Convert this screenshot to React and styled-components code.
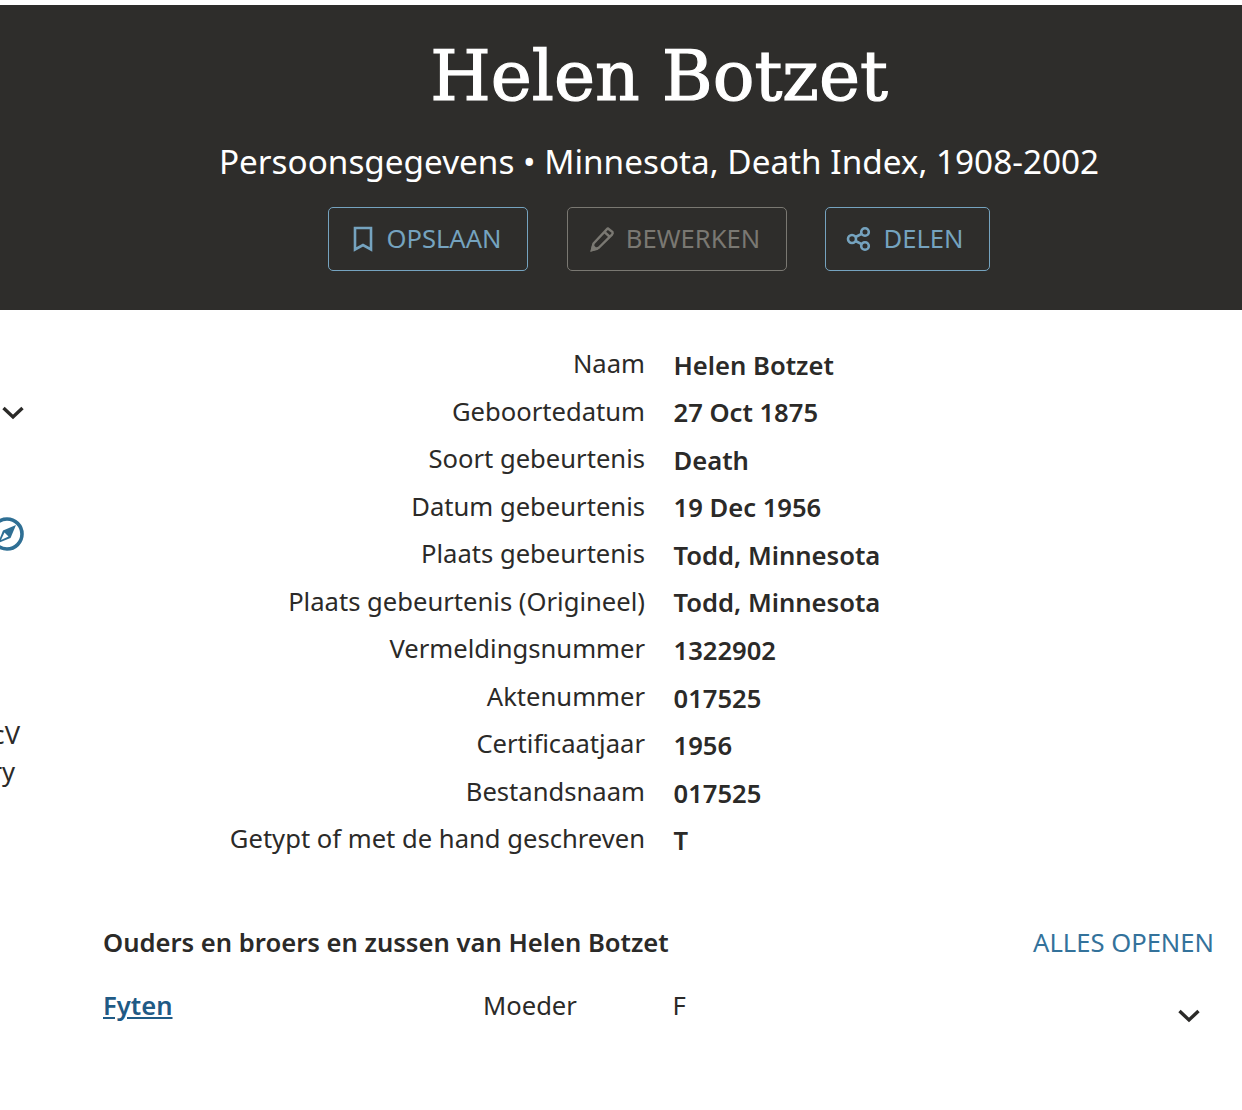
import { Fragment } from "react";
import styled, { createGlobalStyle } from "styled-components";

const GlobalStyle = createGlobalStyle`
  html, body {
    margin: 0;
    padding: 0;
    background: #fff;
  }
  body {
    font-family: "Noto Sans", "Open Sans", sans-serif;
    color: #2b2a28;
    overflow: hidden;
  }
`;

const Page = styled.div`
  width: 1242px;
  height: 1110px;
  padding-top: 5px;
  box-sizing: border-box;
  overflow: hidden;
`;

const Hero = styled.header`
  height: 305px;
  background: #2e2d2b;
  display: flex;
  flex-direction: column;
  align-items: center;
  padding-left: 76px;
  box-sizing: border-box;
`;

const Title = styled.h1`
  margin: 29px 0 0;
  font-family: "DejaVu Serif", serif;
  font-weight: 400;
  font-size: 69.4px;
  line-height: 84px;
  color: #fff;
  -webkit-text-stroke: 1.2px #fff;
  white-space: nowrap;
`;

const Subtitle = styled.p`
  margin: 21px 0 0;
  font-size: 33.3px;
  line-height: 44px;
  color: #fff;
  white-space: nowrap;
`;

const Actions = styled.div`
  display: flex;
  gap: 38px;
  margin-top: 24px;
`;

const ActionButton = styled.div`
  display: flex;
  align-items: center;
  justify-content: center;
  gap: 11px;
  width: ${(p) => p.$width}px;
  height: 64px;
  padding-right: 5px;
  box-sizing: border-box;
  border: 1px solid ${(p) => (p.$disabled ? "#7a7872" : "#75a3bf")};
  border-radius: 5px;
  color: ${(p) => (p.$disabled ? "#7a7872" : "#75a3bf")};
  font-size: 25.6px;
  white-space: nowrap;
  &:first-child {
    margin-right: 1px;
    padding-right: 3px;
  }
`;

const ButtonLabel = styled.span`
  margin-bottom: 2px;
`;

const Body = styled.main`
  display: flex;
  height: 800px;
`;

const Sidebar = styled.aside`
  width: 25px;
  flex: none;
  overflow: hidden;
  display: flex;
  flex-direction: column;
  align-items: flex-end;
`;

const SideChevron = styled.svg`
  margin: 95px 0 0 1px;
  width: 24px;
  height: 16px;
  align-self: flex-start;
`;

const SideCompass = styled.svg`
  margin: 96px 1px 0 0;
  width: 34px;
  height: 34px;
  flex: none;
`;

const SideText = styled.div`
  margin-top: 165px;
  width: 120px;
  flex: none;
  font-size: 25.6px;
  line-height: 37px;
  white-space: nowrap;
`;

const SideLine = styled.div`
  text-align: right;
  padding-right: ${(p) => p.$inset}px;
`;

const Content = styled.div`
  flex: 1;
  min-width: 0;
`;

const Facts = styled.dl`
  display: grid;
  grid-template-columns: 620px 1fr;
  grid-auto-rows: 47.55px;
  column-gap: 28.5px;
  margin: 30px 0 0;
`;

const FactLabel = styled.dt`
  text-align: right;
  font-size: 25.6px;
  line-height: 47.5px;
  white-space: nowrap;
`;

const FactValue = styled.dd`
  margin: 1.7px 0 0;
  font-size: 25.6px;
  font-weight: 600;
  line-height: 47.5px;
  white-space: nowrap;
`;

const FamilyHeader = styled.div`
  display: flex;
  justify-content: space-between;
  align-items: center;
  margin: 62px 28px 0 78px;
`;

const FamilyTitle = styled.h2`
  margin: 0;
  font-size: 25.6px;
  font-weight: 600;
  line-height: 36px;
  white-space: nowrap;
`;

const OpenAll = styled.span`
  font-size: 25.6px;
  line-height: 36px;
  color: #33729b;
  white-space: nowrap;
`;

const FamilyRow = styled.div`
  display: grid;
  grid-template-columns: 380px 189.5px 1fr 24px;
  align-items: start;
  margin: 27px 41px 0 78px;
  font-size: 25.6px;
  line-height: 36px;
`;

const PersonLink = styled.a`
  color: #1f5a85;
  font-weight: 600;
  text-decoration: underline;
`;

const RowChevron = styled.svg`
  width: 24px;
  height: 16px;
  margin-top: 20px;
`;

const Chevron = ({ as: Icon }) => (
  <Icon viewBox="0 0 24 16" fill="none" stroke="#2b2a28" strokeWidth="3.4">
    <path d="M2.5 3 L12 12 L21.5 3" />
  </Icon>
);

const facts = [
  ["Naam", "Helen Botzet"],
  ["Geboortedatum", "27 Oct 1875"],
  ["Soort gebeurtenis", "Death"],
  ["Datum gebeurtenis", "19 Dec 1956"],
  ["Plaats gebeurtenis", "Todd, Minnesota"],
  ["Plaats gebeurtenis (Origineel)", "Todd, Minnesota"],
  ["Vermeldingsnummer", "1322902"],
  ["Aktenummer", "017525"],
  ["Certificaatjaar", "1956"],
  ["Bestandsnaam", "017525"],
  ["Getypt of met de hand geschreven", "T"],
];

const BookmarkIcon = () => (
  <svg width="24" height="26" viewBox="0 0 24 26" fill="none" stroke="currentColor" strokeWidth="2.6">
    <path d="M4 2 H20 V23.5 L12 19 L4 23.5 Z" />
  </svg>
);

const PencilIcon = () => (
  <svg width="26" height="26" viewBox="0 0 26 26" fill="none" stroke="currentColor" strokeWidth="2.4">
    <path d="M19 2.5 L23.5 6 C24 7 23.8 7.6 23 8.6 L9.5 22 L3 24 L4.5 17.5 L18 3.2 C18.4 2.8 18.6 2.6 19 2.5 Z" />
    <path d="M15.5 6 L21 11" />
    <path d="M3 24 L4 20 L7 23 Z" fill="currentColor" />
  </svg>
);

const ShareIcon = () => (
  <svg width="26" height="26" viewBox="0 0 26 26" fill="none" stroke="currentColor" strokeWidth="2.6">
    <circle cx="6" cy="13" r="4" />
    <circle cx="19" cy="6" r="3.8" />
    <circle cx="19" cy="20" r="3.8" />
    <path d="M9.6 11 L15.6 7.8 M9.6 15 L15.6 18.2" />
  </svg>
);

export default function App() {
  return (
    <Page>
      <GlobalStyle />
      <Hero>
        <Title>Helen Botzet</Title>
        <Subtitle>Persoonsgegevens • Minnesota, Death Index, 1908-2002</Subtitle>
        <Actions>
          <ActionButton $width={200}>
            <BookmarkIcon />
            <ButtonLabel>OPSLAAN</ButtonLabel>
          </ActionButton>
          <ActionButton $width={220} $disabled>
            <PencilIcon />
            <ButtonLabel>BEWERKEN</ButtonLabel>
          </ActionButton>
          <ActionButton $width={165}>
            <ShareIcon />
            <ButtonLabel>DELEN</ButtonLabel>
          </ActionButton>
        </Actions>
      </Hero>
      <Body>
        <Sidebar>
          <Chevron as={SideChevron} />
          <SideCompass viewBox="0 0 34 34">
            <circle cx="17" cy="17" r="15" fill="none" stroke="#2f6f94" strokeWidth="3.6" />
            <path d="M26 8 L20.5 21 L8 26 L13 13.5 Z" fill="#2f6f94" />
            <path d="M14.5 15.5 L18.5 19.5 L11 23 Z" fill="#fff" />
          </SideCompass>
          <SideText>
            <SideLine $inset={5}>cV</SideLine>
            <SideLine $inset={10}>ry</SideLine>
          </SideText>
        </Sidebar>
        <Content>
          <Facts>
            {facts.map(([label, value]) => (
              <Fragment key={label}>
                <FactLabel>{label}</FactLabel>
                <FactValue>{value}</FactValue>
              </Fragment>
            ))}
          </Facts>
          <FamilyHeader>
            <FamilyTitle>Ouders en broers en zussen van Helen Botzet</FamilyTitle>
            <OpenAll>ALLES OPENEN</OpenAll>
          </FamilyHeader>
          <FamilyRow>
            <PersonLink href="#">Fyten</PersonLink>
            <span>Moeder</span>
            <span>F</span>
            <Chevron as={RowChevron} />
          </FamilyRow>
        </Content>
      </Body>
    </Page>
  );
}
